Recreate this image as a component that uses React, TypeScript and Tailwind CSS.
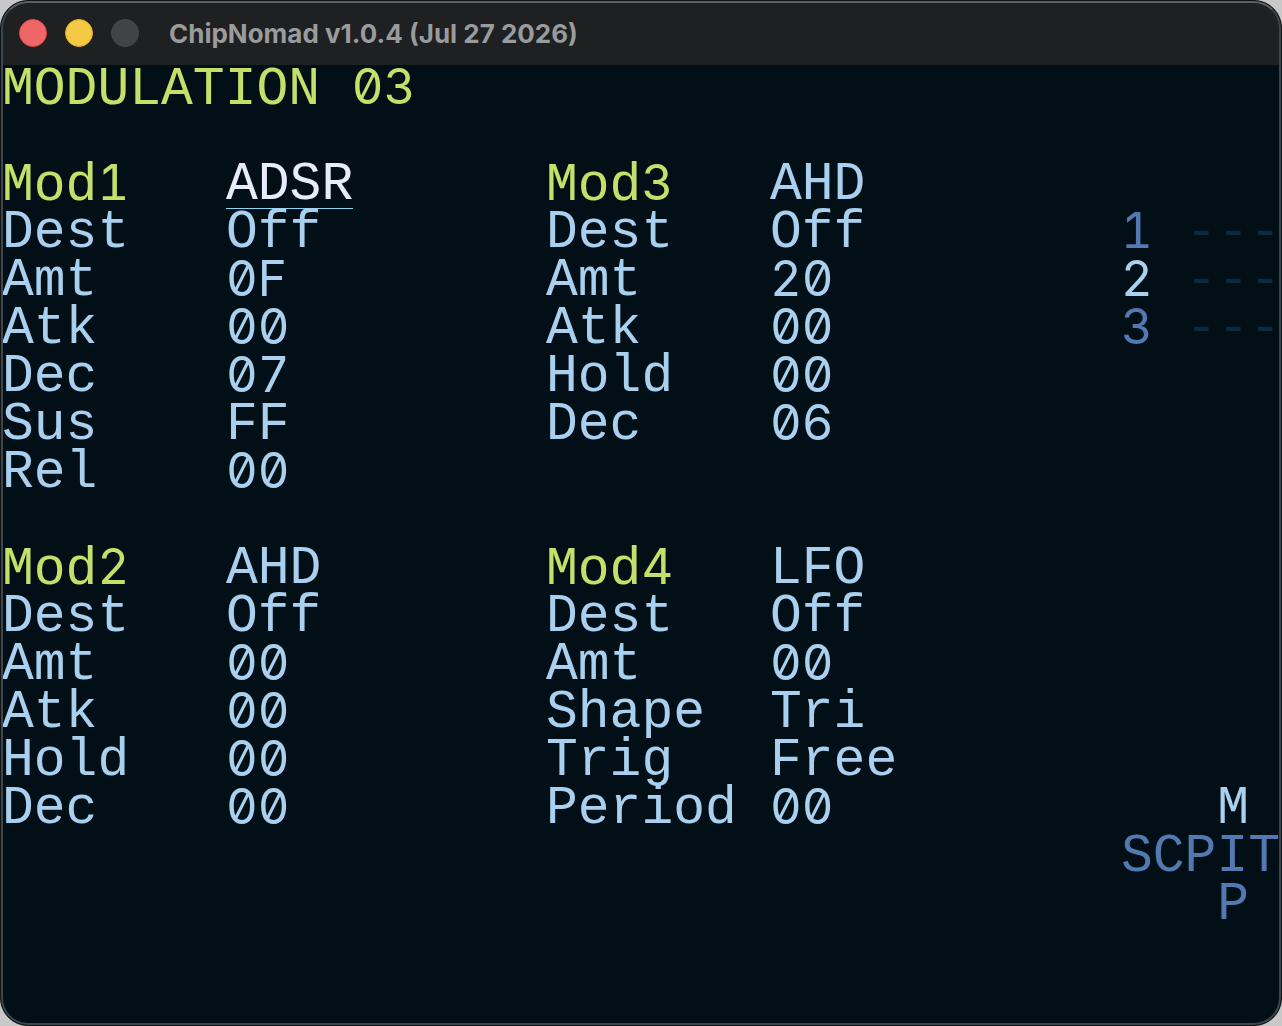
import clsx from "clsx";

interface Param {
  name: string;
  value: string;
}

interface Modulator {
  slot: number;
  type: string;
  params: Param[];
}

const modulators: Modulator[] = [
  {
    slot: 1,
    type: "ADSR",
    params: [
      { name: "Dest", value: "Off" },
      { name: "Amt", value: "0F" },
      { name: "Atk", value: "00" },
      { name: "Dec", value: "07" },
      { name: "Sus", value: "FF" },
      { name: "Rel", value: "00" },
    ],
  },
  {
    slot: 3,
    type: "AHD",
    params: [
      { name: "Dest", value: "Off" },
      { name: "Amt", value: "20" },
      { name: "Atk", value: "00" },
      { name: "Hold", value: "00" },
      { name: "Dec", value: "06" },
    ],
  },
  {
    slot: 2,
    type: "AHD",
    params: [
      { name: "Dest", value: "Off" },
      { name: "Amt", value: "00" },
      { name: "Atk", value: "00" },
      { name: "Hold", value: "00" },
      { name: "Dec", value: "00" },
    ],
  },
  {
    slot: 4,
    type: "LFO",
    params: [
      { name: "Dest", value: "Off" },
      { name: "Amt", value: "00" },
      { name: "Shape", value: "Tri" },
      { name: "Trig", value: "Free" },
      { name: "Period", value: "00" },
    ],
  },
];

const tracks = [
  { id: "1", note: "---" },
  { id: "2", note: "---" },
  { id: "3", note: "---" },
];

const CURRENT_TRACK = "2";
const SELECTED_SLOT = 1;

// tabular digits with a slashed zero
const digits =
  "font-['Inter',sans-serif] text-[49px] leading-[44px] font-normal tabular-nums slashed-zero";

function TitleBar() {
  return (
    <header className="flex h-16 shrink-0 items-center bg-[#1f2021] pl-[18px]">
      <div className="flex gap-[18px]">
        <button
          aria-label="Close"
          className="size-7 rounded-full border border-[#e24b4b] bg-[#ee6665]"
        />
        <button
          aria-label="Minimize"
          className="size-7 rounded-full border border-[#e0ae2c] bg-[#f4c944]"
        />
        <button
          aria-label="Zoom"
          disabled
          className="size-7 rounded-full border border-[#4a4b4c] bg-[#424344]"
        />
      </div>
      <span className="ml-[30px] font-['Inter',sans-serif] text-[26px] font-bold text-[#9a9b9c]">
        ChipNomad v1.0.4 (Jul 27 2026)
      </span>
    </header>
  );
}

function ModulatorBlock({ mod }: { mod: Modulator }) {
  return (
    <section className="grid auto-rows-[48px] grid-cols-[224px_1fr] content-start">
      <h2 className="text-[#c5e068]">
        Mod<span className={digits}>{mod.slot}</span>
      </h2>
      <button
        className={clsx(
          "h-12 justify-self-start border-b",
          mod.slot === SELECTED_SLOT
            ? "border-[#8fd3f5] text-[#e8ecfa]"
            : "border-transparent"
        )}
      >
        {mod.type}
      </button>
      {mod.params.map((param) => (
        <div key={param.name} className="contents">
          <span>{param.name}</span>
          <button
            aria-label={param.name}
            className={clsx(
              "self-start justify-self-start",
              /\d/.test(param.value) && digits
            )}
          >
            {param.value}
          </button>
        </div>
      ))}
    </section>
  );
}

function TrackList() {
  return (
    <div>
      {tracks.map((track) => (
        <div key={track.id} className="flex h-12 justify-between">
          <span
            className={clsx(
              digits,
              track.id === CURRENT_TRACK ? "text-[#a9d0ef]" : "text-[#5379b3]"
            )}
          >
            {track.id}
          </span>
          <span className="text-[#0e293c]">{track.note}</span>
        </div>
      ))}
    </div>
  );
}

function ScreenMap() {
  return (
    <nav className="flex flex-col text-[#5379b3]">
      <span className="self-end pr-8 text-[#a9d0ef]">M</span>
      <span>SCPIT</span>
      <span className="self-end pr-8">P</span>
    </nav>
  );
}

export default function App() {
  return (
    <div className="min-h-screen bg-[#c8c8c8]">
      <div className="relative flex min-h-screen flex-col overflow-hidden rounded-[28px] border border-[#101214] bg-[#020f17]">
        <TitleBar />
        <main className="flex flex-1 justify-between pl-px font-['Liberation_Mono',monospace] text-[53px] leading-[48px] text-[#a9d0ef]">
          <div>
            <h1 className="mb-12 h-12 text-[#c5e068]">
              MODULATION <span className={digits}>03</span>
            </h1>
            <div className="grid grid-cols-[544px_1fr] gap-y-12">
              {modulators.map((mod) => (
                <ModulatorBlock key={mod.slot} mod={mod} />
              ))}
            </div>
          </div>
          <aside className="flex w-40 flex-col gap-[432px] pt-36">
            <TrackList />
            <ScreenMap />
          </aside>
        </main>
        {/* window edge, drawn over the content */}
        <div className="pointer-events-none absolute inset-0 rounded-[27px] border-2 border-[#3b474e] border-t-[#5e5f60]" />
      </div>
    </div>
  );
}
